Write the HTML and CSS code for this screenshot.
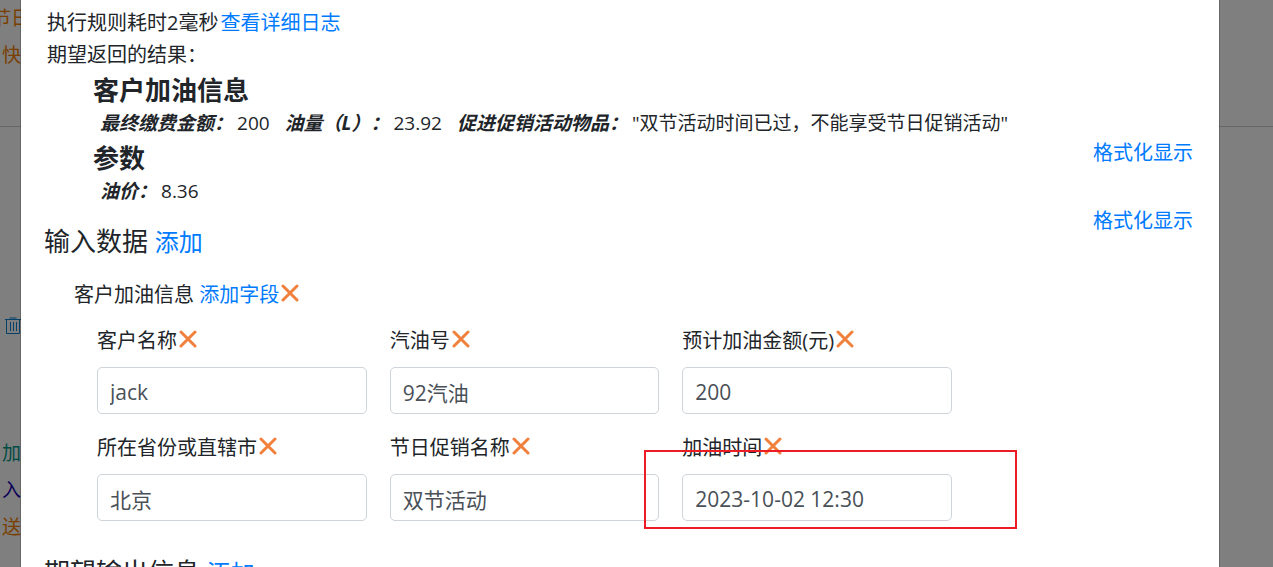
FILE: index.html
```
<!DOCTYPE html>
<html lang="zh-CN">
<head>
  <meta charset="UTF-8">
  <title>规则测试</title>
  <link rel="stylesheet" href="styles.css">
</head>
<body>
  <!-- 图标 -->
  <svg class="icon-defs" width="0" height="0">
    <symbol id="icon-close" viewBox="0 0 18 18">
      <path d="M2 2L16 16M16 2L2 16" fill="none" stroke="currentColor" stroke-width="3" stroke-linecap="round"/>
    </symbol>
  </svg>

  <div class="page">
    <div class="page-top">
      <div class="rule-line wide orange">节日</div>
      <div class="rule-line orange">快</div>
    </div>
    <div class="page-tools">
      <svg class="trash" viewBox="0 0 16 18" fill="none" stroke="currentColor">
        <path d="M0 2.500H16M4.500 1H11.500M1.500 3V16.500H14.500V3M5.500 5V14M8.500 5V14M11.500 5V14"/>
      </svg>
    </div>
    <div class="rule-line teal">户加</div>
    <div class="rule-line navy">入</div>
    <div class="rule-line orange">送</div>
  </div>

  <div class="backdrop">
    <div class="modal">
      <div class="result">
        <div class="result-line">执行规则耗时2毫秒<a href="#">查看详细日志</a></div>
        <div class="result-line">期望返回的结果：</div>
        <div class="result-group">
          <h3>客户加油信息</h3>
          <div class="result-values">
            <span><b>最终缴费金额：</b>200</span>
            <span><b>油量（L）：</b>23.92</span>
            <span><b>促进促销活动物品：</b>"双节活动时间已过，不能享受节日促销活动"</span>
          </div>
          <a class="format-link" href="#">格式化显示</a>
        </div>
        <div class="result-group">
          <h3>参数</h3>
          <div class="result-values">
            <span><b>油价：</b>8.36</span>
          </div>
          <a class="format-link" href="#">格式化显示</a>
        </div>
      </div>

      <h4 class="section-title">输入数据 <a href="#">添加</a></h4>
      <div class="category">
        客户加油信息 <a href="#">添加字段</a><button class="remove" type="button" aria-label="删除"><svg><use href="#icon-close"/></svg></button>
      </div>
      <div class="fields">
        <div class="field">
          <div class="field-head">
            <label for="customer">客户名称</label><button class="remove" type="button" aria-label="删除"><svg><use href="#icon-close"/></svg></button>
          </div>
          <input type="text" id="customer" value="jack">
        </div>
        <div class="field">
          <div class="field-head">
            <label for="gasType">汽油号</label><button class="remove" type="button" aria-label="删除"><svg><use href="#icon-close"/></svg></button>
          </div>
          <input type="text" id="gasType" value="92汽油">
        </div>
        <div class="field">
          <div class="field-head">
            <label for="amount">预计加油金额(元)</label><button class="remove" type="button" aria-label="删除"><svg><use href="#icon-close"/></svg></button>
          </div>
          <input type="text" id="amount" value="200">
        </div>
        <div class="field">
          <div class="field-head">
            <label for="province">所在省份或直辖市</label><button class="remove" type="button" aria-label="删除"><svg><use href="#icon-close"/></svg></button>
          </div>
          <input type="text" id="province" value="北京">
        </div>
        <div class="field">
          <div class="field-head">
            <label for="festival">节日促销名称</label><button class="remove" type="button" aria-label="删除"><svg><use href="#icon-close"/></svg></button>
          </div>
          <input type="text" id="festival" value="双节活动">
        </div>
        <div class="field marked">
          <div class="field-head">
            <label for="gasTime">加油时间</label><button class="remove" type="button" aria-label="删除"><svg><use href="#icon-close"/></svg></button>
          </div>
          <input type="text" id="gasTime" value="2023-10-02 12:30">
        </div>
      </div>

      <h4 class="section-title">期望输出信息 <a href="#">添加</a></h4>
    </div>
  </div>
</body>
</html>
```

FILE: styles.css
```
* {
  box-sizing: border-box;
}

html,
body {
  height: 100%;
}

body {
  margin: 0;
  overflow: hidden;
  font-family: "Open Sans", "Noto Sans CJK SC", sans-serif;
  font-size: 20px;
  line-height: 32px;
  color: #212529;
  background: #fff;
}

a {
  color: #007bff;
  text-decoration: none;
}

.icon-defs {
  position: absolute;
}

/* 底层页面 */
.page-top {
  height: 127px;
  border-bottom: 1px solid #ccc;
}

.rule-line {
  display: flex;
  justify-content: flex-end;
  width: 21px;
  height: 37px;
  font-size: 19px;
  line-height: 37px;
  white-space: nowrap;
}

.rule-line.wide {
  width: 30px;
}

.orange {
  color: #f08000;
}

.teal {
  color: #009688;
}

.navy {
  color: #1a00b3;
}

.page-tools {
  height: 308px;
  padding: 190px 0 0 5px;
  color: #0a80d0;
}

.trash {
  display: block;
  width: 16px;
  height: 18px;
}

/* 弹窗 */
.backdrop {
  position: fixed;
  top: 0;
  right: 0;
  bottom: 0;
  left: 0;
  padding: 0 53px 0 20px;
  overflow: hidden;
  background: rgba(0, 0, 0, 0.5);
}

.modal {
  min-height: 100%;
  padding: 7px 26px 0 23px;
  background: #fff;
  background-clip: padding-box;
  border: solid rgba(0, 0, 0, 0.2);
  border-width: 0 1px;
}

/* 执行结果 */
.result-line {
  padding-left: 3px;
}

.result-line a {
  margin-left: 2px;
}

.result-group {
  padding-left: 49px;
}

.result-group h3 {
  margin: 0;
  padding-top: 1px;
  font-size: 26px;
  line-height: 36px;
}

.result-values {
  display: flex;
  gap: 15px;
  padding-left: 7px;
  font-size: 19px;
  line-height: 31px;
}

.result-values b {
  margin-right: 4px;
  font-style: italic;
}

.format-link {
  float: right;
  line-height: 28px;
}

/* 输入数据 */
.section-title {
  margin: 0;
  padding-top: 14px;
  font-size: 26px;
  font-weight: 400;
  line-height: 40px;
}

.section-title a {
  font-size: 24px;
}

.category {
  margin: 17px 0 14px;
  padding-left: 30px;
}

.fields {
  display: grid;
  grid-template-columns: repeat(3, 1fr);
  gap: 18px 23px;
  margin: 0 241px 17px 53px;
}

.field-head {
  height: 42px;
}

.field input {
  display: block;
  width: 100%;
  height: 47px;
  padding: 8px 12px 6px;
  border: 1px solid #ced4da;
  border-radius: 5px;
  background: #fff;
  font: inherit;
  font-size: 21px;
  color: #495057;
}

.remove {
  margin-left: 2px;
  padding: 0;
  border: none;
  background: none;
  color: #f0803c;
  cursor: pointer;
}

.remove svg {
  display: block;
  width: 18px;
  height: 18px;
}

/* 红框标注 */
.marked {
  position: relative;
}

.marked::after {
  content: "";
  position: absolute;
  top: 18px;
  right: -65px;
  bottom: -8px;
  left: -38px;
  border: 2px solid #ed1c24;
  pointer-events: none;
}
```
